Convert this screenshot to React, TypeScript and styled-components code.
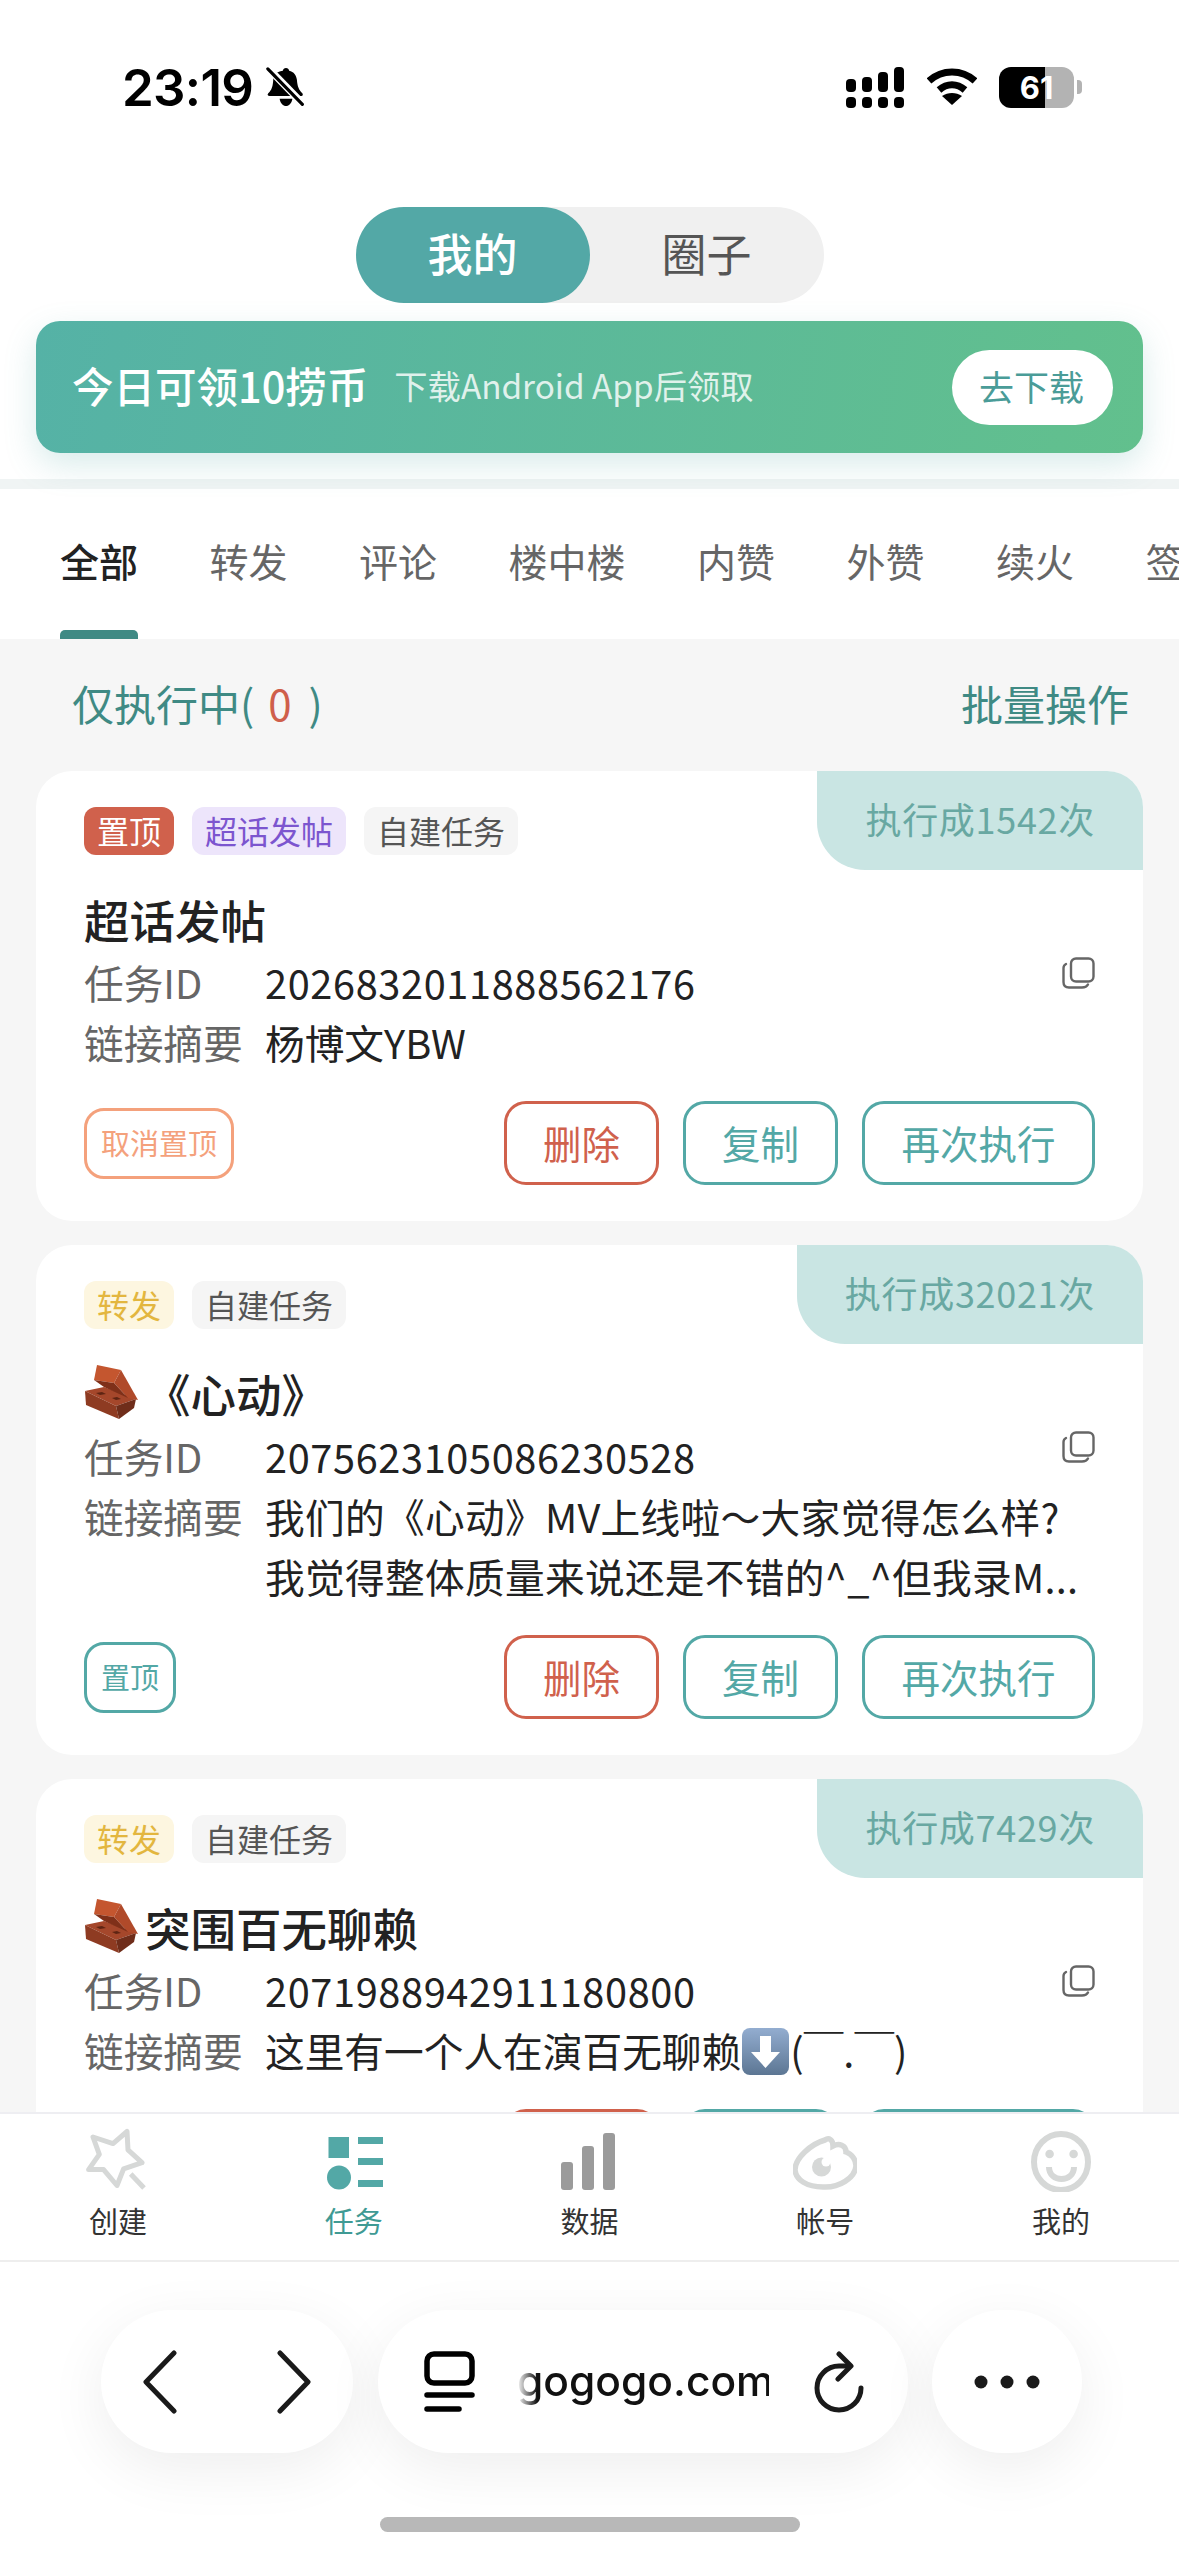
import React from "react";
import styled, { createGlobalStyle } from "styled-components";

const Global = createGlobalStyle`
  html, body { margin: 0; padding: 0; background: #fff; }
  * { box-sizing: border-box; }
  body { font-family: "Noto Sans CJK SC", "Noto Sans", sans-serif; }
`;

const Screen = styled.div`
  width: 1179px;
  height: 2556px;
  display: flex;
  flex-direction: column;
  overflow: hidden;
  background: #fff;
  color: #222;
`;

const StatusBar = styled.div`
  height: 207px;
  flex: none;
  padding: 57px 97px 0 122px;
  display: flex;
  justify-content: space-between;
  align-items: flex-start;
`;
const StatusLeft = styled.div`
  display: flex;
  align-items: center;
  gap: 13px;
  height: 60px;
`;
const Time = styled.span`
  font-family: Inter, "Liberation Sans", sans-serif;
  font-weight: 600;
  font-size: 51px;
  letter-spacing: -0.7px;
  color: #000;
`;
const StatusRight = styled.div`
  display: flex;
  align-items: center;
  height: 60px;
`;
const BatteryWrap = styled.div`
  display: flex;
  align-items: center;
  margin-left: 22px;
`;
const Battery = styled.div`
  width: 75px;
  height: 41px;
  border-radius: 12px;
  background: linear-gradient(90deg, #000 61%, #b3b3b3 61%);
  color: #fff;
  font-family: Inter, "Liberation Sans", sans-serif;
  font-size: 31px;
  font-weight: 700;
  display: flex;
  align-items: center;
  justify-content: center;
  line-height: 1;
`;
const BatteryCap = styled.div`
  width: 5px;
  height: 14px;
  margin-left: 3px;
  border-radius: 0 4px 4px 0;
  background: #b3b3b3;
`;

const Switch = styled.div`
  align-self: center;
  width: 468px;
  height: 96px;
  border-radius: 48px;
  background: #f0f0f0;
  display: flex;
  flex: none;
`;
const SwitchItem = styled.div<{ $on?: boolean }>`
  width: 234px;
  padding-bottom: 6px;
  border-radius: 48px;
  display: flex;
  align-items: center;
  justify-content: center;
  font-size: 45px;
  font-weight: ${(p) => (p.$on ? 500 : 400)};
  color: ${(p) => (p.$on ? "#fff" : "#555")};
  background: ${(p) => (p.$on ? "#53a8a6" : "transparent")};
`;

const Banner = styled.div`
  flex: none;
  margin: 18px 36px 0;
  height: 132px;
  border-radius: 24px;
  padding: 0 30px 0 36px;
  background: linear-gradient(100deg, #55b2a6 0%, #62c08d 100%);
  box-shadow: 0 12px 32px rgba(83, 168, 166, 0.22);
  display: flex;
  align-items: center;
  color: #fff;
  position: relative;
`;
const BannerTitle = styled.span`
  font-size: 41.5px;
  font-weight: 500;
  padding-bottom: 5px;
`;
const BannerSub = styled.span`
  font-size: 33.3px;
  margin-left: 26px;
  padding-bottom: 5px;
  color: rgba(255, 255, 255, 0.82);
  flex: 1;
`;
const BannerBtn = styled.div`
  width: 161px;
  height: 75px;
  margin-left: -1px;
  padding: 0 2px 3px 0;
  border-radius: 38px;
  background: #fff;
  color: #4a9c98;
  font-size: 35px;
  display: flex;
  align-items: center;
  justify-content: center;
`;

const Band = styled.div`
  flex: none;
  height: 36px;
  background: #fff;
  display: flex;
  align-items: flex-end;
`;
const BandLine = styled.div`
  width: 100%;
  height: 10px;
  background: #f0f4f4;
`;

const Tabs = styled.div`
  flex: none;
  height: 150px;
  padding-left: 60px;
  display: flex;
  background: #fff;
  overflow: hidden;
  gap: 71.5px;
`;
const Tab = styled.div<{ $on?: boolean }>`
  position: relative;
  flex: none;
  padding-top: 43px;
  font-size: 39px;
  line-height: 56px;
  font-weight: ${(p) => (p.$on ? 500 : 400)};
  color: ${(p) => (p.$on ? "#222" : "#666")};
  &::after {
    content: "";
    display: ${(p) => (p.$on ? "block" : "none")};
    position: absolute;
    left: 0;
    right: 0;
    bottom: 0;
    height: 9px;
    border-radius: 5px 5px 0 0;
    background: #3f8a84;
  }
`;

const Scroll = styled.div`
  flex: 1;
  min-height: 0;
  overflow: hidden;
  background: #f6f6f6;
  padding: 0 36px;
`;
const Filter = styled.div`
  height: 132px;
  padding: 0 14px 6px 36px;
  display: flex;
  align-items: center;
  justify-content: space-between;
  font-size: 42px;
  color: #3f8a84;
`;
const Count = styled.span`
  color: #cf5f4b;
  margin: 0 17px 0 14px;
`;

const Card = styled.div`
  position: relative;
  background: #fff;
  border-radius: 36px;
  padding: 36px 48px 36px;
  margin-bottom: 24px;
`;
const ExecBadge = styled.div`
  position: absolute;
  top: 0;
  right: 0;
  height: 99px;
  padding: 0 48px 5px 48px;
  border-radius: 0 36px 0 48px;
  background: #c9e5e3;
  color: #68a8a2;
  font-size: 36px;
  letter-spacing: 0.7px;
  display: flex;
  align-items: center;
`;
const TagRow = styled.div`
  display: flex;
  gap: 18px;
  height: 48px;
`;
const Tag = styled.span<{ $bg: string; $fg: string }>`
  height: 48px;
  padding: 0 13px 2px;
  border-radius: 12px;
  background: ${(p) => p.$bg};
  color: ${(p) => p.$fg};
  font-size: 32px;
  display: flex;
  align-items: center;
`;
const Title = styled.div`
  margin-top: 31px;
  height: 66px;
  font-size: 45.5px;
  font-weight: 500;
  color: #222;
  display: flex;
  align-items: center;
`;
const Brick = styled.svg`
  width: 56px;
  height: 56px;
  margin-right: 5px;
  flex: none;
`;
const InfoRow = styled.div`
  position: relative;
  display: flex;
  font-size: 39.7px;
  line-height: 60px;
`;
const InfoLabel = styled.span`
  width: 181px;
  flex: none;
  color: #666;
`;
const InfoValue = styled.span<{ $num?: boolean }>`
  color: #222;
  flex: 1;
  min-width: 0;
  letter-spacing: ${(p) => (p.$num ? "0.64px" : "0")};
`;
const InfoLine = styled.div`
  white-space: nowrap;
  letter-spacing: 0.3px;
`;
const Copy = styled.svg`
  position: absolute;
  right: 0;
  top: 5px;
  width: 33px;
  height: 32px;
`;
const Arrow = styled.svg`
  width: 49px;
  height: 49px;
  vertical-align: -9px;
`;
const Actions = styled.div`
  margin-top: 29px;
  display: flex;
  align-items: center;
  gap: 24px;
`;
const PinBtn = styled.div<{ $c: string }>`
  height: 71px;
  padding: 0 14px 2px;
  border: 3px solid ${(p) => p.$c};
  border-radius: 20px;
  color: ${(p) => p.$c};
  font-size: 29px;
  display: flex;
  align-items: center;
  margin-right: auto;
`;
const ActionBtn = styled.div<{ $c: string; $w: number }>`
  width: ${(p) => p.$w}px;
  height: 84px;
  padding-bottom: 3px;
  border: 3px solid ${(p) => p.$c};
  border-radius: 22px;
  color: ${(p) => p.$c};
  font-size: 38.500px;
  display: flex;
  align-items: center;
  justify-content: center;
`;

const Nav = styled.div`
  flex: none;
  height: 150px;
  background: #fff;
  border-top: 2px solid #eeeef2;
  border-bottom: 2px solid #eeeeee;
  display: grid;
  grid-template-columns: repeat(5, 1fr);
`;
const NavItem = styled.div<{ $on?: boolean }>`
  display: flex;
  flex-direction: column;
  align-items: center;
  color: ${(p) => (p.$on ? "#3f9a94" : "#333")};
  font-size: 29px;
  padding-top: 14px;
`;
const NavIcon = styled.svg`
  width: 64px;
  height: 64px;
  flex: none;
`;
const NavLabel = styled.span`
  margin-top: 8px;
  line-height: 40px;
`;

const Browser = styled.div`
  flex: none;
  height: 294px;
  background: #fff;
  padding: 48px 0 0 101px;
  position: relative;
`;
const PillRow = styled.div`
  display: flex;
  gap: 24px;
`;
const Pill = styled.div<{ $w: number }>`
  width: ${(p) => p.$w}px;
  height: 143px;
  border-radius: 72px;
  background: #fff;
  box-shadow: 0 16px 60px rgba(0, 0, 0, 0.07);
  display: flex;
  align-items: center;
`;
const NavPill = styled(Pill)`
  justify-content: space-between;
  padding: 0 40px;
`;
const UrlPill = styled(Pill)`
  margin-left: 1px;
  padding: 0 0 0 46px;
`;
const MorePill = styled(Pill)`
  justify-content: center;
`;
const Url = styled.div`
  width: 252px;
  margin-left: 42px;
  font-family: Inter, "Liberation Sans", Arial, sans-serif;
  font-weight: 500;
  font-size: 42.500px;
  color: #111;
  white-space: nowrap;
  overflow: hidden;
  padding-bottom: 2px;
  mask-image: linear-gradient(90deg, transparent 0, #000 20px);
`;
const Reload = styled.svg`
  margin-left: 45px;
  flex: none;
`;
const HomeBar = styled.div`
  position: absolute;
  left: 380px;
  bottom: 24px;
  width: 420px;
  height: 15px;
  border-radius: 8px;
  background: #b8b8b8;
`;

const BrickIcon = () => (
  <Brick viewBox="0 0 56 56">
    <path d="M1 26 L20 22 L52 34 L32 41 Z" fill="#a5472b" />
    <path d="M1 26 L32 41 L35 54 L2 40 Z" fill="#8e3b22" />
    <path d="M32 41 L52 34 L50 43 L35 54 Z" fill="#6f2d1a" />
    <path d="M12 28 L18 27 L22 29 L16 30 Z M28 33 L33 32 L37 34 L32 35 Z" fill="#5e2413" />
    <path d="M10 15 L13 0 L37 5 L30 18 Z" fill="#c4562f" />
    <path d="M37 5 L54 35 L44 33 L30 18 Z" fill="#b04a2a" />
    <path d="M10 15 L30 18 L44 33 L20 22 Z" fill="#7f3019" />
  </Brick>
);

const CopyIcon = () => (
  <Copy viewBox="0 0 33 32" fill="none" stroke="#666" strokeWidth="2.4">
    <rect x="9" y="1.500" width="22.500" height="23" rx="5" />
    <path d="M4 7 C2 8 1.500 9 1.500 11 V25 C1.500 28.500 3.500 30.500 7 30.500 H20 C23 30.500 25 29.500 26 27.500" strokeLinecap="round" />
  </Copy>
);

const DownArrow = () => (
  <Arrow viewBox="0 0 49 49">
    <defs>
      <linearGradient id="emojiBlue" x1="0" y1="0" x2="0" y2="1">
        <stop offset="0" stopColor="#93add0" />
        <stop offset="1" stopColor="#5c7693" />
      </linearGradient>
    </defs>
    <rect x="1" y="1" width="47" height="47" rx="8" fill="url(#emojiBlue)" />
    <path d="M19 9 H30 V25 H39 L24.500 41 L10 25 H19 Z" fill="#fff" />
  </Arrow>
);

const Cards = () => (
  <>
    <Card>
      <ExecBadge>执行成1542次</ExecBadge>
      <TagRow>
        <Tag $bg="#d0614c" $fg="#fff">置顶</Tag>
        <Tag $bg="#ede5fb" $fg="#7c55cf">超话发帖</Tag>
        <Tag $bg="#f5f5f5" $fg="#555">自建任务</Tag>
      </TagRow>
      <Title>超话发帖</Title>
      <InfoRow>
        <InfoLabel>任务ID</InfoLabel>
        <InfoValue $num>2026832011888562176</InfoValue>
        <CopyIcon />
      </InfoRow>
      <InfoRow>
        <InfoLabel>链接摘要</InfoLabel>
        <InfoValue>杨博文YBW</InfoValue>
      </InfoRow>
      <Actions>
        <PinBtn $c="#f4a17c">取消置顶</PinBtn>
        <ActionBtn $c="#d0614c" $w={155}>删除</ActionBtn>
        <ActionBtn $c="#53a8a6" $w={155}>复制</ActionBtn>
        <ActionBtn $c="#53a8a6" $w={233}>再次执行</ActionBtn>
      </Actions>
    </Card>
    <Card>
      <ExecBadge>执行成32021次</ExecBadge>
      <TagRow>
        <Tag $bg="#fdf6e0" $fg="#e3b63f">转发</Tag>
        <Tag $bg="#f5f5f5" $fg="#555">自建任务</Tag>
      </TagRow>
      <Title><BrickIcon />《心动》</Title>
      <InfoRow>
        <InfoLabel>任务ID</InfoLabel>
        <InfoValue $num>2075623105086230528</InfoValue>
        <CopyIcon />
      </InfoRow>
      <InfoRow>
        <InfoLabel>链接摘要</InfoLabel>
        <InfoValue>
          <InfoLine>我们的《心动》MV上线啦～大家觉得怎么样?</InfoLine>
          <InfoLine>我觉得整体质量来说还是不错的^_^但我录M...</InfoLine>
        </InfoValue>
      </InfoRow>
      <Actions>
        <PinBtn $c="#53a8a6">置顶</PinBtn>
        <ActionBtn $c="#d0614c" $w={155}>删除</ActionBtn>
        <ActionBtn $c="#53a8a6" $w={155}>复制</ActionBtn>
        <ActionBtn $c="#53a8a6" $w={233}>再次执行</ActionBtn>
      </Actions>
    </Card>
    <Card>
      <ExecBadge>执行成7429次</ExecBadge>
      <TagRow>
        <Tag $bg="#fdf6e0" $fg="#e3b63f">转发</Tag>
        <Tag $bg="#f5f5f5" $fg="#555">自建任务</Tag>
      </TagRow>
      <Title><BrickIcon />突围百无聊赖</Title>
      <InfoRow>
        <InfoLabel>任务ID</InfoLabel>
        <InfoValue $num>2071988942911180800</InfoValue>
        <CopyIcon />
      </InfoRow>
      <InfoRow>
        <InfoLabel>链接摘要</InfoLabel>
        <InfoValue>这里有一个人在演百无聊赖<DownArrow />(￣.￣)</InfoValue>
      </InfoRow>
      <Actions>
        <PinBtn $c="#53a8a6">置顶</PinBtn>
        <ActionBtn $c="#d0614c" $w={155}>删除</ActionBtn>
        <ActionBtn $c="#53a8a6" $w={155}>复制</ActionBtn>
        <ActionBtn $c="#53a8a6" $w={233}>再次执行</ActionBtn>
      </Actions>
    </Card>
  </>
);

export default function App() {
  return (
    <Screen>
      <Global />
      <StatusBar>
        <StatusLeft>
          <Time>23:19</Time>
          <svg width="40" height="44" viewBox="0 0 44 44">
            <path d="M22 1c2 0 3 1 3.500 3 5 1 8 5 8.500 10 .5 7 2 11 6 15 1 1.500 .5 3-1 3H4c-2 0-3-1.500-1.500-3 4-4 5-8 5.500-15 0-5 3-9 10.500-10C19 2 20 1 22 1z" fill="#000" />
            <path d="M15 35h14c-.5 5-4 8-7 8s-6.500-3-7-8z" fill="#000" />
            <path d="M3 2 L41 41" stroke="#fff" strokeWidth="8" />
            <path d="M2 2 L40 41" stroke="#000" strokeWidth="3.500" strokeLinecap="round" />
          </svg>
        </StatusLeft>
        <StatusRight>
          <svg width="58" height="41" viewBox="0 0 58 41" fill="#000">
            <rect x="0" y="12" width="10" height="13" rx="4" />
            <rect x="16" y="10" width="10" height="15" rx="4" />
            <rect x="32" y="5" width="10" height="20" rx="4" />
            <rect x="48" y="0" width="10" height="25" rx="4" />
            <rect x="0" y="30" width="10" height="11" rx="4" />
            <rect x="16" y="30" width="10" height="11" rx="4" />
            <rect x="32" y="30" width="10" height="11" rx="4" />
            <rect x="48" y="30" width="10" height="11" rx="4" />
          </svg>
          <svg width="50" height="38" viewBox="0 0 50 38" style={{ marginLeft: 23 }}>
            <path d="M2 13 C15 1 35 1 48 13" fill="none" stroke="#000" strokeWidth="7" />
            <path d="M12 22 C20 15 30 15 38 22" fill="none" stroke="#000" strokeWidth="7" />
            <path d="M25 37 L15 28 C21 24 29 24 35 28 Z" fill="#000" />
          </svg>
          <BatteryWrap>
            <Battery>61</Battery>
            <BatteryCap />
          </BatteryWrap>
        </StatusRight>
      </StatusBar>

      <Switch>
        <SwitchItem $on>我的</SwitchItem>
        <SwitchItem>圈子</SwitchItem>
      </Switch>

      <Banner>
        <BannerTitle>今日可领10捞币</BannerTitle>
        <BannerSub>下载Android App后领取</BannerSub>
        <BannerBtn>去下载</BannerBtn>
      </Banner>

      <Band><BandLine /></Band>

      <Tabs>
        <Tab $on>全部</Tab>
        <Tab>转发</Tab>
        <Tab>评论</Tab>
        <Tab>楼中楼</Tab>
        <Tab>内赞</Tab>
        <Tab>外赞</Tab>
        <Tab>续火</Tab>
        <Tab>签到</Tab>
      </Tabs>

      <Scroll>
        <Filter>
          <span>仅执行中(<Count>0</Count>)</span>
          <span>批量操作</span>
        </Filter>
        <Cards />
      </Scroll>

      <Nav>
        <NavItem>
          <NavIcon viewBox="0 0 64 64" fill="none" stroke="#d6d8d7" strokeWidth="5" strokeLinejoin="round">
            <path d="M7 9 L27 15.600 L41 3.500 L42 21.800 L56 34.700 L37.600 40.900 L31 57.500 L17.600 41.600 L2.600 41.600 L13.300 26.400 Z" />
            <path d="M44.700 46 L58 60" />
          </NavIcon>
          <NavLabel>创建</NavLabel>
        </NavItem>
        <NavItem $on>
          <NavIcon viewBox="0 0 64 64" fill="#53a8a6">
            <rect x="6.500" y="9" width="20.500" height="21" />
            <circle cx="17" cy="49.500" r="12" />
            <rect x="36" y="9" width="25" height="7" />
            <rect x="36" y="30" width="25" height="7" />
            <rect x="36" y="52" width="25" height="7" />
          </NavIcon>
          <NavLabel>任务</NavLabel>
        </NavItem>
        <NavItem>
          <NavIcon viewBox="0 0 64 64" fill="#9b9b9b">
            <rect x="4" y="34" width="12" height="28" rx="3" />
            <rect x="25" y="18" width="12" height="44" rx="3" />
            <rect x="46" y="5" width="12" height="57" rx="3" />
          </NavIcon>
          <NavLabel>数据</NavLabel>
        </NavItem>
        <NavItem>
          <NavIcon viewBox="0 0 64 64" fill="none" stroke="#d6d8d7" strokeWidth="5.500">
            <path d="M32 12 C36 9 40 12 40 18 C46 15 53 17 53 24 C59 26 63 32 63 38 C62 50 46 60 30 59 C14 59 3 52 2 42 C2 30 18 16 32 12 Z" />
            <circle cx="28.500" cy="39" r="9.500" fill="#d6d8d7" stroke="none" />
            <circle cx="33" cy="34" r="4.500" fill="#fff" stroke="none" />
          </NavIcon>
          <NavLabel>帐号</NavLabel>
        </NavItem>
        <NavItem>
          <NavIcon viewBox="0 0 64 64" fill="none" stroke="#d6d8d7" strokeWidth="6">
            <ellipse cx="32" cy="34" rx="27" ry="28" />
            <circle cx="20.600" cy="26" r="4.300" fill="#d6d8d7" stroke="none" />
            <circle cx="44.600" cy="26" r="4.300" fill="#d6d8d7" stroke="none" />
            <path d="M20 39 C20 55 45 55 45 39" />
          </NavIcon>
          <NavLabel>我的</NavLabel>
        </NavItem>
      </Nav>

      <Browser>
        <PillRow>
          <NavPill $w={252}>
            <svg width="38" height="64" viewBox="0 0 38 64" fill="none" stroke="#1a1a1a" strokeWidth="5" strokeLinecap="round" strokeLinejoin="round">
              <path d="M33 3 L5 32 L33 61" />
            </svg>
            <svg width="38" height="64" viewBox="0 0 38 64" fill="none" stroke="#1a1a1a" strokeWidth="5" strokeLinecap="round" strokeLinejoin="round">
              <path d="M5 3 L33 32 L5 61" />
            </svg>
          </NavPill>
          <UrlPill $w={530}>
            <svg width="51" height="62" viewBox="0 0 51 62" fill="none" stroke="#000" strokeWidth="5.500" strokeLinecap="round">
              <rect x="3" y="3" width="45" height="29" rx="7" />
              <path d="M3 44 H48" />
              <path d="M3 58 H35" />
            </svg>
            <Url>gogogo.com</Url>
            <Reload width="50" height="62" viewBox="0 0 50 62" fill="none" stroke="#1a1a1a" strokeWidth="5" strokeLinecap="round" strokeLinejoin="round">
              <path d="M33 15 H25 A22 22 0 1 0 47 37" />
              <path d="M25 3 L37 15 L24 28" />
            </Reload>
          </UrlPill>
          <MorePill $w={150}>
            <svg width="68" height="16" viewBox="0 0 68 16" fill="#1a1a1a">
              <circle cx="8" cy="8" r="6.500" />
              <circle cx="34" cy="8" r="6.500" />
              <circle cx="60" cy="8" r="6.500" />
            </svg>
          </MorePill>
        </PillRow>
        <HomeBar />
      </Browser>
    </Screen>
  );
}
